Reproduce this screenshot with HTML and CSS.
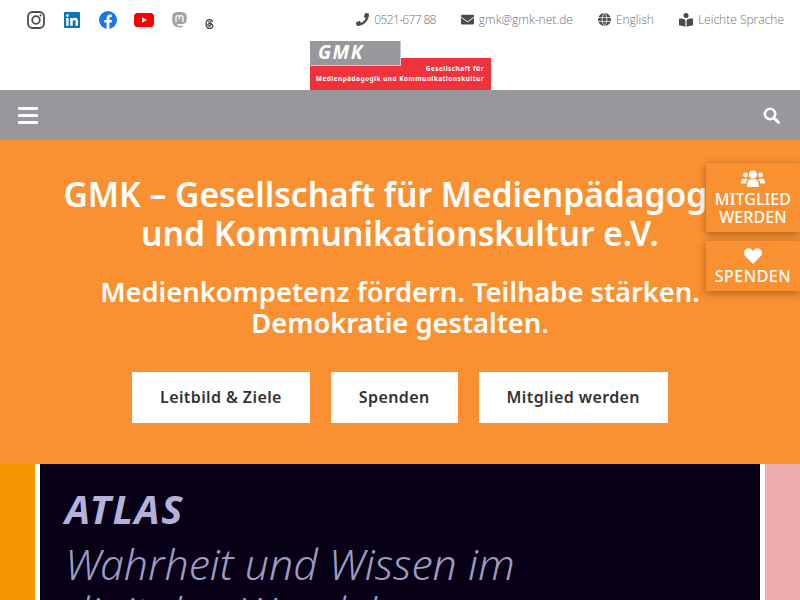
FILE: index.html
```html
<!DOCTYPE html>
<html lang="de">
<head>
  <meta charset="UTF-8" />
  <meta name="viewport" content="width=device-width, initial-scale=1.0" />
  <title>GMK</title>
  <link rel="stylesheet" href="styles.css">
</head>
<body>
  <div class="topbar">
    <div class="social">
      <svg class="ig" width="18" height="18" viewBox="0 0 18 18"><rect x="1" y="1" width="16" height="16" rx="4.5" fill="none" stroke="#4d4a4c" stroke-width="1.8"/><circle cx="9" cy="9" r="3.8" fill="none" stroke="#4d4a4c" stroke-width="1.8"/><circle cx="13.6" cy="4.4" r="1.1" fill="#4d4a4c"/></svg>
      <svg class="li" width="16" height="16" viewBox="0 0 16 16"><rect width="16" height="16" rx="1" fill="#0a76b4"/><rect x="2.2" y="6" width="2.4" height="7.8" fill="#fff"/><circle cx="3.4" cy="3.6" r="1.4" fill="#fff"/><path d="M6.2 6h2.3v1.1c.5-.8 1.3-1.3 2.5-1.3 2.2 0 3 1.4 3 3.5v4.5h-2.4V9.9c0-1-.3-1.8-1.3-1.8s-1.6.8-1.6 1.8v3.9H6.2z" fill="#fff"/></svg>
      <svg class="fb" width="18" height="18" viewBox="0 0 18 18"><circle cx="9" cy="9" r="9" fill="#1877f2"/><path d="M7.6 18v-6.4H5.3V9h2.3V7c0-2.3 1.3-3.5 3.4-3.5.9 0 1.9.2 1.9.2v2.2h-1.1c-1.1 0-1.4.7-1.4 1.4V9h2.5l-.4 2.6h-2.1V18z" fill="#fff"/></svg>
      <svg class="yt" width="20" height="14" viewBox="0 0 20 14"><rect width="20" height="14" rx="3.5" fill="#f00"/><path d="M8 4.2v5.6L13 7z" fill="#fff"/></svg>
      <svg class="ma" width="15" height="16" viewBox="0 0 15 16"><path d="M14.8 5c0-3.200-2.100-4.200-2.100-4.200C11.600.3 9.800 0 7.500 0S3.400.3 2.300.8C2.300.8.200 1.800.200 5c0 3.800-.2 8 3.600 9.600 1.500.6 3.100.9 4.500.8 1.300-.1 2.300-.5 2.300-.5l-.1-1.300s-1.100.4-2.500.3c-1.300 0-2.700-.1-2.900-1.800v-.4c2.700.6 5 .3 5.600.2 1.900-.2 3.600-1.400 3.800-2.500.4-1.700.3-4.400.3-4.400z" fill="#a3a3a5"/><path d="M4 10V5.600c0-1.300.8-2 1.900-2 1 0 1.600.6 1.600 1.700v1.900m0 0V5.300c0-1.100.6-1.700 1.600-1.700 1.100 0 1.900.7 1.900 2V10" fill="none" stroke="#fff" stroke-width="1.300"/></svg>
      <svg class="th" width="9" height="10" viewBox="0 0 9 10"><path d="M7.600 3C7.200 1.400 6 .6 4.500.6 2.200.6 1 2.400 1 5s1.200 4.400 3.500 4.400c2 0 3.300-1.200 3.300-2.500 0-1.500-1.500-2.400-3.300-2.300-1 0-1.800.5-1.800 1.300s.8 1.300 1.700 1.200c1.100-.1 1.700-1 1.600-2.800C5.900 3 5.100 2.700 4.500 2.700c-.5 0-1 .2-1.300.7" fill="none" stroke="#333" stroke-width="1.100"/></svg>
    </div>
    <div class="contact">
      <span class="contact-item">
        <svg width="13" height="13" viewBox="0 0 512 512"><path fill="#4a4a4c" d="M493 24 389 0c-11-3-23 3-27 14l-48 112c-4 10-1 21 7 28l60 50c-36 77-99 140-177 177l-50-60c-7-8-18-11-28-7L14 362C3 366-3 378 0 389l24 104c3 11 12 19 24 19 256 0 464-208 464-464 0-12-8-21-19-24z"/></svg>
        <span class="phone">0521-677 88</span>
      </span>
      <span class="contact-item">
        <svg width="13" height="13" viewBox="0 0 512 512"><path fill="#4a4a4c" d="M502 191c4-3 10 0 10 5v204c0 27-21 48-48 48H48c-27 0-48-21-48-48V196c0-5 6-8 10-5 22 17 52 39 154 113 21 15 57 48 92 48s72-33 92-48c102-74 132-96 154-113zM256 320c23 0 57-29 73-41 133-97 143-105 174-129 6-5 9-12 9-19v-19c0-27-21-48-48-48H48C21 64 0 85 0 112v19c0 7 3 14 9 19 31 24 41 32 174 129 16 12 50 41 73 41z"/></svg>
        gmk@gmk-net.de
      </span>
      <span class="contact-item">
        <svg width="13" height="13" viewBox="0 0 13 13"><circle cx="6.500" cy="6.500" r="6.500" fill="#4a4a4c"/><path d="M0 4.600h13M0 8.400h13M6.500 0C3.300 3.500 3.300 9.500 6.500 13M6.500 0c3.200 3.500 3.200 9.500 0 13" fill="none" stroke="#fff" stroke-width=".8"/></svg>
        English
      </span>
      <span class="contact-item">
        <svg width="14" height="14" viewBox="0 0 14 14"><circle cx="7" cy="2.500" r="2.500" fill="#4a4a4c"/><path d="M0 5.500c2.500 0 5 .3 6.400 1.500v7C5 13 2.500 12.500 0 12.500zM14 5.500c-2.500 0-5 .3-6.400 1.500v7c1.400-1 3.900-1.500 6.400-1.500z" fill="#4a4a4c"/></svg>
        Leichte Sprache
      </span>
    </div>
  </div>

  <div class="logo-row">
    <div class="logo">
      <div class="logo-red">Gesellschaft für<br>Medienpädagogik und Kommunikationskultur</div>
      <div class="logo-grey">GMK</div>
    </div>
  </div>

  <div class="navbar">
    <div class="burger"><span></span><span></span><span></span></div>
    <svg width="17" height="17" viewBox="0 0 17 17"><circle cx="7" cy="7" r="5.200" fill="none" stroke="#fff" stroke-width="2.600"/><path d="M11 11l4.500 4.500" stroke="#fff" stroke-width="3" stroke-linecap="round"/></svg>
  </div>

  <div class="hero">
    <h1>GMK – Gesellschaft für Medienpädagogik und Kommunikationskultur e.V.</h1>
    <h2>Medienkompetenz fördern. Teilhabe stärken. Demokratie gestalten.</h2>
    <div class="hero-buttons">
      <a class="hero-button">Leitbild &amp; Ziele</a>
      <a class="hero-button">Spenden</a>
      <a class="hero-button">Mitglied werden</a>
    </div>
  </div>

  <div class="side-links">
    <div class="side-link">
      <svg width="24" height="17" viewBox="0 0 24 17"><circle cx="12" cy="4.500" r="4" fill="#fff"/><circle cx="4.500" cy="5" r="2.400" fill="#fff"/><circle cx="19.500" cy="5" r="2.400" fill="#fff"/><path d="M6.300 17v-3.500c0-2.700 1.800-4.300 3.700-4.300h4c1.900 0 3.700 1.600 3.700 4.300V17z" fill="#fff"/><path d="M0 12.500c0-2.500 1.300-3.800 3-3.800h2.500c.5 0 1 .2 1.300.5-1.200 1-2 2.500-2 4.200H0zM24 12.500c0-2.500-1.300-3.800-3-3.800h-2.500c-.5 0-1 .2-1.300.5 1.200 1 2 2.500 2 4.200H24z" fill="#fff"/></svg>
      <span>MITGLIED WERDEN</span>
    </div>
    <div class="side-link side-link-wide">
      <svg width="18" height="16" viewBox="0 0 19 17"><path d="M9.500 17 1.500 8.800C-.5 6.700-.5 3.300 1.500 1.500c2-1.900 5-1.700 6.800.3l1.200 1.300 1.200-1.300c1.800-2 4.800-2.200 6.800-.3 2 1.800 2 5.200 0 7.300z" fill="#fff"/></svg>
      <span>SPENDEN</span>
    </div>
  </div>

  <div class="slider">
    <div class="slide-prev"></div>
    <div class="slide">
      <div class="slide-title">ATLAS</div>
      <div class="slide-text">Wahrheit und Wissen im digitalen Wandel</div>
    </div>
    <div class="slide-next"></div>
  </div>
</body>
</html>
```

FILE: styles.css
```css
html, body {
  height: 600px;
  overflow: hidden;
}
body {
  margin: 0;
  font-family: "Noto Sans", Arial, sans-serif;
  background-color: white;
  position: relative;
}
.topbar {
  height: 41px;
  display: flex;
  align-items: center;
  justify-content: space-between;
  padding: 0 16px 2px 27px;
  box-sizing: border-box;
}
.social {
  display: flex;
  align-items: center;
}
.social svg {
  display: block;
}
.social .li { margin-left: 19px; }
.social .fb { margin-left: 19px; }
.social .yt { margin-left: 17px; }
.social .ma { margin-left: 18px; }
.social .th { margin: 9px 0 0 18px; }
.contact {
  display: flex;
  gap: 25px;
}
.contact-item {
  display: flex;
  align-items: center;
  gap: 5px;
  font-family: "Open Sans", sans-serif;
  font-size: 12px;
  font-weight: 300;
  color: #6f7073;
}
.phone {
  letter-spacing: -.65px;
}
.logo-row {
  height: 49px;
  display: flex;
  justify-content: center;
}
.logo {
  position: relative;
  width: 181px;
  height: 49px;
  margin-left: 1px;
}
.logo-grey {
  position: absolute;
  top: 0;
  left: 0;
  width: 91px;
  height: 25px;
  box-sizing: border-box;
  padding-left: 8px;
  background: #97989b;
  border-right: 1px solid #c9cacc;
  border-bottom: 1px solid #c9cacc;
  color: white;
  font-size: 19px;
  font-style: italic;
  font-weight: 700;
  line-height: 23px;
  letter-spacing: 1.5px;
}
.logo-red {
  position: absolute;
  left: 0;
  bottom: 0;
  width: 100%;
  height: 32px;
  box-sizing: border-box;
  padding: 6px 7px 0 0;
  background: #f0323c;
  color: white;
  font-size: 6.500px;
  font-weight: 700;
  line-height: 10px;
  text-align: right;
  letter-spacing: .45px;
}
.navbar {
  height: 50px;
  background-color: #97989b;
  display: flex;
  align-items: center;
  justify-content: space-between;
  padding: 0 20px 0 18px;
}
.burger {
  width: 20px;
  display: flex;
  flex-direction: column;
  gap: 4px;
}
.burger span {
  height: 3px;
  background: white;
}
.hero {
  height: 324px;
  box-sizing: border-box;
  padding-top: 35px;
  background-color: #f99132;
  color: white;
  text-align: center;
}
.hero h1 {
  margin: 0 auto;
  width: 700px;
  font-size: 33.600px;
  font-weight: 600;
  line-height: 39px;
}
.hero h2 {
  margin: 23px auto 0;
  width: 620px;
  font-size: 27.300px;
  font-weight: 600;
  line-height: 31px;
}
.hero-buttons {
  display: flex;
  justify-content: center;
  gap: 21px;
  margin-top: 34px;
}
.hero-button {
  height: 51px;
  line-height: 51px;
  padding: 0 28px;
  background: white;
  color: #333;
  font-size: 16px;
  font-weight: 600;
  letter-spacing: .4px;
}
.side-links {
  position: absolute;
  top: 163px;
  right: 0;
  width: 94px;
  display: flex;
  flex-direction: column;
  gap: 9px;
}
.side-link {
  box-sizing: border-box;
  padding: 7px 0 6px;
  background-color: #f99132;
  box-shadow: 0 2px 8px rgba(0, 0, 0, .35);
  color: white;
  font-size: 16px;
  font-weight: 500;
  line-height: 18px;
  letter-spacing: .1px;
  text-align: center;
  display: flex;
  flex-direction: column;
  align-items: center;
  gap: 3px;
}
.side-link-wide {
  letter-spacing: .5px;
}
.slider {
  height: 136px;
  display: flex;
  gap: 5px;
  overflow: hidden;
}
.slide-prev {
  width: 35px;
  background: #f59600;
}
.slide-next {
  width: 35px;
  background: #efaeae;
}
.slide {
  flex: 1;
  box-sizing: border-box;
  padding: 22px 25px 0;
  background: #080016;
  color: #9e9cc0;
  font-style: italic;
}
.slide-title {
  font-size: 40px;
  font-weight: 700;
  line-height: 46px;
  letter-spacing: 1.500px;
  color: #b4b2d8;
}
.slide-text {
  margin-top: 8px;
  width: 520px;
  font-size: 42.800px;
  font-weight: 300;
  line-height: 48px;
}
```
